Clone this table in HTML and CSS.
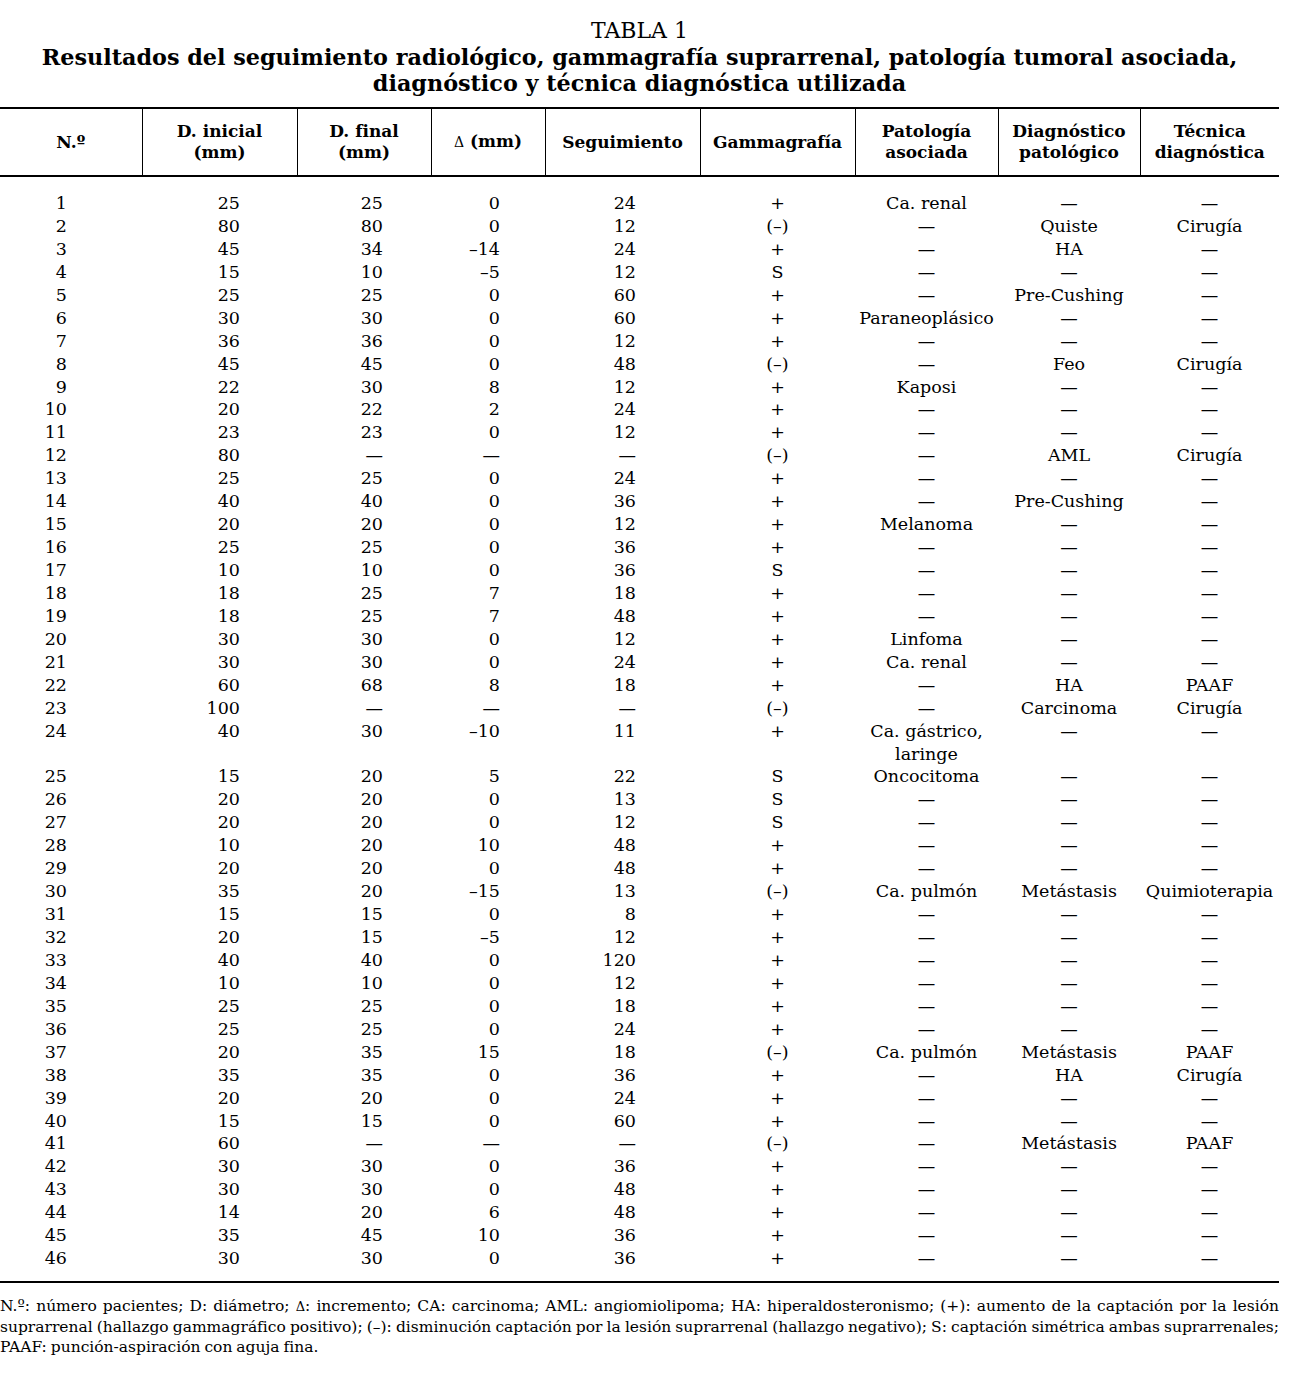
FILE: index.html
```html
<!DOCTYPE html>
<html lang="es">
<head>
<meta charset="utf-8">
<title>Tabla 1</title>
<link rel="stylesheet" href="styles.css">
</head>
<body>
<div class="page">
  <div class="caption">
    <div class="label">TABLA 1</div>
    <h1 class="title">Resultados del seguimiento radiológico, gammagrafía suprarrenal, patología tumoral asociada,<br>diagnóstico y técnica diagnóstica utilizada</h1>
  </div>
  <table class="data">
    <colgroup>
      <col class="w1"><col class="w2"><col class="w3"><col class="w4"><col class="w5"><col class="w6"><col class="w7"><col class="w8"><col class="w9">
    </colgroup>
    <thead>
      <tr>
        <th>N.º</th>
        <th>D. inicial<br>(mm)</th>
        <th>D. final<br>(mm)</th>
        <th><span class="delta">Δ</span> (mm)</th>
        <th>Seguimiento</th>
        <th>Gammagrafía</th>
        <th>Patología<br>asociada</th>
        <th>Diagnóstico<br>patológico</th>
        <th>Técnica<br>diagnóstica</th>
      </tr>
    </thead>
    <tbody>
      <tr><td class="n">1</td><td class="di">25</td><td class="df">25</td><td class="dl">0</td><td class="sg">24</td><td class="c">+</td><td class="c">Ca. renal</td><td class="c">—</td><td class="c">—</td></tr>
      <tr><td class="n">2</td><td class="di">80</td><td class="df">80</td><td class="dl">0</td><td class="sg">12</td><td class="c">(–)</td><td class="c">—</td><td class="c">Quiste</td><td class="c">Cirugía</td></tr>
      <tr><td class="n">3</td><td class="di">45</td><td class="df">34</td><td class="dl">–14</td><td class="sg">24</td><td class="c">+</td><td class="c">—</td><td class="c">HA</td><td class="c">—</td></tr>
      <tr><td class="n">4</td><td class="di">15</td><td class="df">10</td><td class="dl">–5</td><td class="sg">12</td><td class="c">S</td><td class="c">—</td><td class="c">—</td><td class="c">—</td></tr>
      <tr><td class="n">5</td><td class="di">25</td><td class="df">25</td><td class="dl">0</td><td class="sg">60</td><td class="c">+</td><td class="c">—</td><td class="c">Pre-Cushing</td><td class="c">—</td></tr>
      <tr><td class="n">6</td><td class="di">30</td><td class="df">30</td><td class="dl">0</td><td class="sg">60</td><td class="c">+</td><td class="c">Paraneoplásico</td><td class="c">—</td><td class="c">—</td></tr>
      <tr><td class="n">7</td><td class="di">36</td><td class="df">36</td><td class="dl">0</td><td class="sg">12</td><td class="c">+</td><td class="c">—</td><td class="c">—</td><td class="c">—</td></tr>
      <tr><td class="n">8</td><td class="di">45</td><td class="df">45</td><td class="dl">0</td><td class="sg">48</td><td class="c">(–)</td><td class="c">—</td><td class="c">Feo</td><td class="c">Cirugía</td></tr>
      <tr><td class="n">9</td><td class="di">22</td><td class="df">30</td><td class="dl">8</td><td class="sg">12</td><td class="c">+</td><td class="c">Kaposi</td><td class="c">—</td><td class="c">—</td></tr>
      <tr><td class="n">10</td><td class="di">20</td><td class="df">22</td><td class="dl">2</td><td class="sg">24</td><td class="c">+</td><td class="c">—</td><td class="c">—</td><td class="c">—</td></tr>
      <tr><td class="n">11</td><td class="di">23</td><td class="df">23</td><td class="dl">0</td><td class="sg">12</td><td class="c">+</td><td class="c">—</td><td class="c">—</td><td class="c">—</td></tr>
      <tr><td class="n">12</td><td class="di">80</td><td class="df">—</td><td class="dl">—</td><td class="sg">—</td><td class="c">(–)</td><td class="c">—</td><td class="c">AML</td><td class="c">Cirugía</td></tr>
      <tr><td class="n">13</td><td class="di">25</td><td class="df">25</td><td class="dl">0</td><td class="sg">24</td><td class="c">+</td><td class="c">—</td><td class="c">—</td><td class="c">—</td></tr>
      <tr><td class="n">14</td><td class="di">40</td><td class="df">40</td><td class="dl">0</td><td class="sg">36</td><td class="c">+</td><td class="c">—</td><td class="c">Pre-Cushing</td><td class="c">—</td></tr>
      <tr><td class="n">15</td><td class="di">20</td><td class="df">20</td><td class="dl">0</td><td class="sg">12</td><td class="c">+</td><td class="c">Melanoma</td><td class="c">—</td><td class="c">—</td></tr>
      <tr><td class="n">16</td><td class="di">25</td><td class="df">25</td><td class="dl">0</td><td class="sg">36</td><td class="c">+</td><td class="c">—</td><td class="c">—</td><td class="c">—</td></tr>
      <tr><td class="n">17</td><td class="di">10</td><td class="df">10</td><td class="dl">0</td><td class="sg">36</td><td class="c">S</td><td class="c">—</td><td class="c">—</td><td class="c">—</td></tr>
      <tr><td class="n">18</td><td class="di">18</td><td class="df">25</td><td class="dl">7</td><td class="sg">18</td><td class="c">+</td><td class="c">—</td><td class="c">—</td><td class="c">—</td></tr>
      <tr><td class="n">19</td><td class="di">18</td><td class="df">25</td><td class="dl">7</td><td class="sg">48</td><td class="c">+</td><td class="c">—</td><td class="c">—</td><td class="c">—</td></tr>
      <tr><td class="n">20</td><td class="di">30</td><td class="df">30</td><td class="dl">0</td><td class="sg">12</td><td class="c">+</td><td class="c">Linfoma</td><td class="c">—</td><td class="c">—</td></tr>
      <tr><td class="n">21</td><td class="di">30</td><td class="df">30</td><td class="dl">0</td><td class="sg">24</td><td class="c">+</td><td class="c">Ca. renal</td><td class="c">—</td><td class="c">—</td></tr>
      <tr><td class="n">22</td><td class="di">60</td><td class="df">68</td><td class="dl">8</td><td class="sg">18</td><td class="c">+</td><td class="c">—</td><td class="c">HA</td><td class="c">PAAF</td></tr>
      <tr><td class="n">23</td><td class="di">100</td><td class="df">—</td><td class="dl">—</td><td class="sg">—</td><td class="c">(–)</td><td class="c">—</td><td class="c">Carcinoma</td><td class="c">Cirugía</td></tr>
      <tr><td class="n">24</td><td class="di">40</td><td class="df">30</td><td class="dl">–10</td><td class="sg">11</td><td class="c">+</td><td class="c">Ca. gástrico,<br>laringe</td><td class="c">—</td><td class="c">—</td></tr>
      <tr><td class="n">25</td><td class="di">15</td><td class="df">20</td><td class="dl">5</td><td class="sg">22</td><td class="c">S</td><td class="c">Oncocitoma</td><td class="c">—</td><td class="c">—</td></tr>
      <tr><td class="n">26</td><td class="di">20</td><td class="df">20</td><td class="dl">0</td><td class="sg">13</td><td class="c">S</td><td class="c">—</td><td class="c">—</td><td class="c">—</td></tr>
      <tr><td class="n">27</td><td class="di">20</td><td class="df">20</td><td class="dl">0</td><td class="sg">12</td><td class="c">S</td><td class="c">—</td><td class="c">—</td><td class="c">—</td></tr>
      <tr><td class="n">28</td><td class="di">10</td><td class="df">20</td><td class="dl">10</td><td class="sg">48</td><td class="c">+</td><td class="c">—</td><td class="c">—</td><td class="c">—</td></tr>
      <tr><td class="n">29</td><td class="di">20</td><td class="df">20</td><td class="dl">0</td><td class="sg">48</td><td class="c">+</td><td class="c">—</td><td class="c">—</td><td class="c">—</td></tr>
      <tr><td class="n">30</td><td class="di">35</td><td class="df">20</td><td class="dl">–15</td><td class="sg">13</td><td class="c">(–)</td><td class="c">Ca. pulmón</td><td class="c">Metástasis</td><td class="c">Quimioterapia</td></tr>
      <tr><td class="n">31</td><td class="di">15</td><td class="df">15</td><td class="dl">0</td><td class="sg">8</td><td class="c">+</td><td class="c">—</td><td class="c">—</td><td class="c">—</td></tr>
      <tr><td class="n">32</td><td class="di">20</td><td class="df">15</td><td class="dl">–5</td><td class="sg">12</td><td class="c">+</td><td class="c">—</td><td class="c">—</td><td class="c">—</td></tr>
      <tr><td class="n">33</td><td class="di">40</td><td class="df">40</td><td class="dl">0</td><td class="sg">120</td><td class="c">+</td><td class="c">—</td><td class="c">—</td><td class="c">—</td></tr>
      <tr><td class="n">34</td><td class="di">10</td><td class="df">10</td><td class="dl">0</td><td class="sg">12</td><td class="c">+</td><td class="c">—</td><td class="c">—</td><td class="c">—</td></tr>
      <tr><td class="n">35</td><td class="di">25</td><td class="df">25</td><td class="dl">0</td><td class="sg">18</td><td class="c">+</td><td class="c">—</td><td class="c">—</td><td class="c">—</td></tr>
      <tr><td class="n">36</td><td class="di">25</td><td class="df">25</td><td class="dl">0</td><td class="sg">24</td><td class="c">+</td><td class="c">—</td><td class="c">—</td><td class="c">—</td></tr>
      <tr><td class="n">37</td><td class="di">20</td><td class="df">35</td><td class="dl">15</td><td class="sg">18</td><td class="c">(–)</td><td class="c">Ca. pulmón</td><td class="c">Metástasis</td><td class="c">PAAF</td></tr>
      <tr><td class="n">38</td><td class="di">35</td><td class="df">35</td><td class="dl">0</td><td class="sg">36</td><td class="c">+</td><td class="c">—</td><td class="c">HA</td><td class="c">Cirugía</td></tr>
      <tr><td class="n">39</td><td class="di">20</td><td class="df">20</td><td class="dl">0</td><td class="sg">24</td><td class="c">+</td><td class="c">—</td><td class="c">—</td><td class="c">—</td></tr>
      <tr><td class="n">40</td><td class="di">15</td><td class="df">15</td><td class="dl">0</td><td class="sg">60</td><td class="c">+</td><td class="c">—</td><td class="c">—</td><td class="c">—</td></tr>
      <tr><td class="n">41</td><td class="di">60</td><td class="df">—</td><td class="dl">—</td><td class="sg">—</td><td class="c">(–)</td><td class="c">—</td><td class="c">Metástasis</td><td class="c">PAAF</td></tr>
      <tr><td class="n">42</td><td class="di">30</td><td class="df">30</td><td class="dl">0</td><td class="sg">36</td><td class="c">+</td><td class="c">—</td><td class="c">—</td><td class="c">—</td></tr>
      <tr><td class="n">43</td><td class="di">30</td><td class="df">30</td><td class="dl">0</td><td class="sg">48</td><td class="c">+</td><td class="c">—</td><td class="c">—</td><td class="c">—</td></tr>
      <tr><td class="n">44</td><td class="di">14</td><td class="df">20</td><td class="dl">6</td><td class="sg">48</td><td class="c">+</td><td class="c">—</td><td class="c">—</td><td class="c">—</td></tr>
      <tr><td class="n">45</td><td class="di">35</td><td class="df">45</td><td class="dl">10</td><td class="sg">36</td><td class="c">+</td><td class="c">—</td><td class="c">—</td><td class="c">—</td></tr>
      <tr><td class="n">46</td><td class="di">30</td><td class="df">30</td><td class="dl">0</td><td class="sg">36</td><td class="c">+</td><td class="c">—</td><td class="c">—</td><td class="c">—</td></tr>
    </tbody>
  </table>
  <div class="notes">
    <div class="nl just">N.º: número pacientes; D: diámetro; <span class="delta-s">Δ</span>: incremento; CA: carcinoma; AML: angiomiolipoma; HA: hiperaldosteronismo; (+): aumento de la captación por la lesión</div>
    <div class="nl just">suprarrenal (hallazgo gammagráfico positivo); (–): disminución captación por la lesión suprarrenal (hallazgo negativo); S: captación simétrica ambas suprarrenales;</div>
    <div class="nl">PAAF: punción-aspiración con aguja fina.</div>
  </div>
</div>
</body>
</html>
```

FILE: styles.css
```css
html, body {
  margin: 0;
  padding: 0;
  background: #fff;
  color: #000;
}

.page {
  width: 1279px;
  font-family: "DejaVu Serif", "Liberation Serif", serif;
}

.caption {
  text-align: center;
  padding-top: 18px;
}

.label {
  font-size: 22px;
  line-height: 26px;
  font-weight: normal;
}

.title {
  margin: 0;
  font-size: 22.3px;
  line-height: 26px;
  font-weight: bold;
}

.data {
  margin-top: 11px;
  width: 1279px;
  border-collapse: collapse;
  table-layout: fixed;
  border-top: 2.5px solid #000;
  border-bottom: 2.5px solid #000;
}

.w1 { width: 142px; }
.w2 { width: 155px; }
.w3 { width: 134px; }
.w4 { width: 114px; }
.w5 { width: 155px; }
.w6 { width: 155px; }
.w7 { width: 143px; }
.w8 { width: 142px; }
.w9 { width: 139px; }

.data th {
  height: 66px;
  padding: 0;
  font-size: 17px;
  line-height: 21px;
  font-weight: bold;
  text-align: center;
  vertical-align: middle;
  border-bottom: 2.5px solid #000;
  border-left: 1.5px solid #000;
}

.data th:first-child {
  border-left: none;
}

.delta {
  font-weight: normal;
  font-size: 14px;
}

.data td {
  padding: 0;
  font-size: 17.5px;
  line-height: 22.93px;
  vertical-align: top;
  white-space: nowrap;
}

.data tbody tr:first-child td {
  padding-top: 15px;
}

.data tbody tr:last-child td {
  padding-bottom: 11px;
}

.n  { text-align: right; padding-right: 75px !important; }
.di { text-align: right; padding-right: 57px !important; }
.df { text-align: right; padding-right: 48px !important; }
.dl { text-align: right; padding-right: 45px !important; }
.sg { text-align: right; padding-right: 64px !important; }
.c  { text-align: center; }

.notes {
  padding-top: 13px;
  font-size: 15.5px;
  line-height: 20px;
  word-spacing: -1px;
}

.nl {
  white-space: nowrap;
}

.just {
  text-align: justify;
  text-align-last: justify;
  white-space: normal;
}

.delta-s {
  font-size: 13px;
}
```
